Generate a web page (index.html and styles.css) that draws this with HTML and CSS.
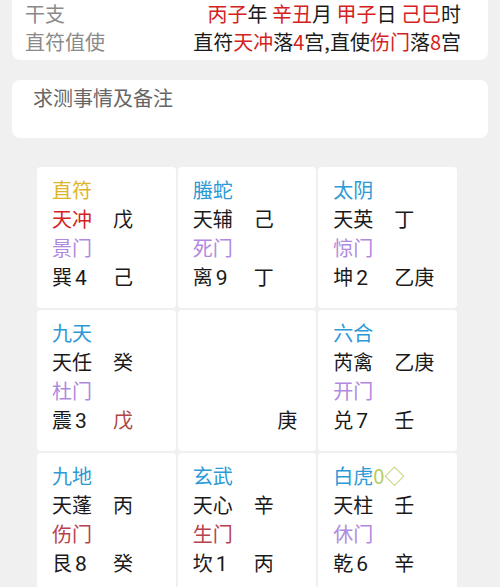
FILE: index.html
```html
<!DOCTYPE html>
<html lang="zh">
<head>
<meta charset="utf-8">
<link rel="stylesheet" href="styles.css">
</head>
<body>
<div class="page">
  <div class="card info">
    <div class="info-row first"><span class="label">干支</span><span class="value"><span class="r">丙子</span>年 <span class="r">辛丑</span>月 <span class="r">甲子</span>日 <span class="r">己巳</span>时</span></div>
    <div class="info-row"><span class="label">直符值使</span><span class="value">直符<span class="r">天冲</span>落<span class="r">4</span>宫,直使<span class="r">伤门</span>落<span class="r">8</span>宫</span></div>
  </div>
  <div class="card note">求测事情及备注</div>
  <div class="grid">
    <div class="cell">
      <div class="line gold">直符</div>
      <div class="line"><span class="c1 r">天冲</span><span>戊</span></div>
      <div class="line purple">景门</div>
      <div class="line"><span class="c1">巽<span class="num">4</span></span><span>己</span></div>
    </div>
    <div class="cell">
      <div class="line blue">螣蛇</div>
      <div class="line"><span class="c1">天辅</span><span>己</span></div>
      <div class="line purple">死门</div>
      <div class="line"><span class="c1">离<span class="num">9</span></span><span>丁</span></div>
    </div>
    <div class="cell">
      <div class="line blue">太阴</div>
      <div class="line"><span class="c1">天英</span><span>丁</span></div>
      <div class="line purple">惊门</div>
      <div class="line"><span class="c1">坤<span class="num">2</span></span><span>乙庚</span></div>
    </div>
    <div class="cell">
      <div class="line blue">九天</div>
      <div class="line"><span class="c1">天任</span><span>癸</span></div>
      <div class="line purple">杜门</div>
      <div class="line"><span class="c1">震<span class="num">3</span></span><span class="brown">戊</span></div>
    </div>
    <div class="cell center">
      <div class="line"></div>
      <div class="line"></div>
      <div class="line"></div>
      <div class="line end">庚</div>
    </div>
    <div class="cell">
      <div class="line blue">六合</div>
      <div class="line"><span class="c1">芮禽</span><span>乙庚</span></div>
      <div class="line purple">开门</div>
      <div class="line"><span class="c1">兑<span class="num">7</span></span><span>壬</span></div>
    </div>
    <div class="cell">
      <div class="line blue">九地</div>
      <div class="line"><span class="c1">天蓬</span><span>丙</span></div>
      <div class="line rose">伤门</div>
      <div class="line"><span class="c1">艮<span class="num">8</span></span><span>癸</span></div>
    </div>
    <div class="cell">
      <div class="line blue">玄武</div>
      <div class="line"><span class="c1">天心</span><span>辛</span></div>
      <div class="line rose">生门</div>
      <div class="line"><span class="c1">坎<span class="num">1</span></span><span>丙</span></div>
    </div>
    <div class="cell">
      <div class="line"><span class="blue">白虎</span><span class="lime">0◇</span></div>
      <div class="line"><span class="c1">天柱</span><span>壬</span></div>
      <div class="line purple">休门</div>
      <div class="line"><span class="c1">乾<span class="num">6</span></span><span>辛</span></div>
    </div>
  </div>
</div>
</body>
</html>
```
FILE: styles.css
```css
html, body {
  margin: 0;
  padding: 0;
  background: #f0f0f0;
  font-family: "Noto Sans CJK SC", "Noto Sans", sans-serif;
  font-size: 20px;
  color: #1a1a1a;
  overflow: hidden;
}
.page {
  padding: 0 12px;
}
.card {
  background: #fff;
  border-radius: 8px;
}
.info {
  border-radius: 0 0 8px 8px;
  padding: 0 27px 4px 13px;
}
.info-row {
  display: flex;
  justify-content: space-between;
  line-height: 29px;
  height: 29px;
}
.info-row.first {
  line-height: 27px;
  height: 27px;
}
.label {
  color: #8a8a8a;
}
.value {
  color: #1a1a1a;
}
.r { color: #d42222; }
.note {
  margin-top: 20px;
  height: 58px;
  box-sizing: border-box;
  padding: 3px 21px;
  line-height: 29px;
  color: #666;
}
.grid {
  margin: 29px 31px 0 25px;
  display: grid;
  grid-template-columns: repeat(3, 1fr);
  grid-auto-rows: 141px;
  gap: 2px;
}
.cell {
  background: #fff;
  border-radius: 4px;
  padding: 8px 15px 0 15px;
}
.line {
  display: flex;
  height: 29px;
  line-height: 29px;
}
.c1 {
  width: 61px;
  flex: none;
}
.num {
  margin-left: 3px;
  font-family: "Roboto", "Noto Sans", sans-serif;
  font-size: 21px;
}
.end {
  justify-content: flex-end;
  padding-right: 4px;
}
.gold { color: #ddb52a; }
.blue { color: #2c9ad6; }
.purple { color: #b08ade; }
.rose { color: #b8414d; }
.brown { color: #b04545; }
.lime { color: #b5cc5a; }
```
